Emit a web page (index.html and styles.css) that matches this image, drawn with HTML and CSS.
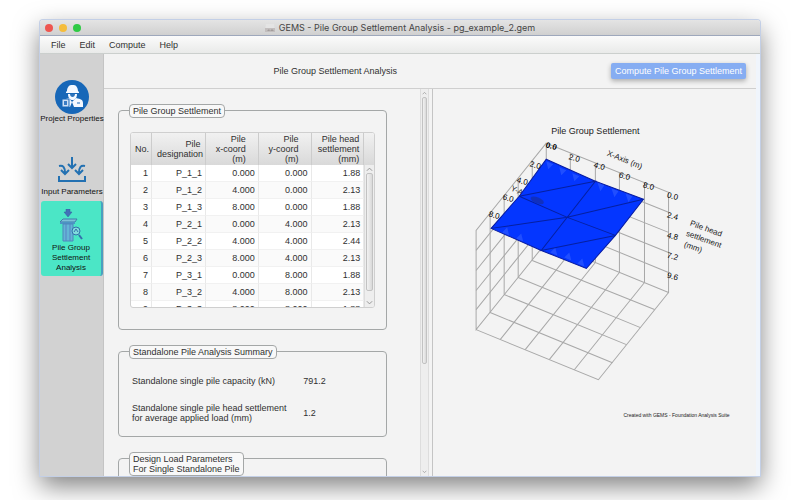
FILE: index.html
```html
<!DOCTYPE html>
<html lang="en">
<head>
<meta charset="utf-8">
<title>GEMS - Pile Group Settlement Analysis</title>
<link rel="stylesheet" href="styles.css">
</head>
<body>
<div class="window">
  <div class="titlebar">
    <div class="lights"><i class="light red"></i><i class="light amber"></i><i class="light green"></i></div>
    <div class="window-title">
      <svg class="doc-icon" viewBox="0 0 10 8" aria-hidden="true"><path d="M1 0h8l1 7H0z" fill="#e4e4e4"/><path d="M0 4h10v4H0z" fill="#c2bebe"/><path d="M2 7l2-2 1 2 2-2 2 2z" fill="#a29c9b"/></svg>
      <span>GEMS - Pile Group Settlement Analysis - pg_example_2.gem</span>
    </div>
  </div>
  <nav class="menubar">
    <button type="button">File</button><button type="button">Edit</button><button type="button">Compute</button><button type="button">Help</button>
  </nav>
  <div class="body">
    <nav class="sidebar">
      <a class="side-item properties" href="#properties">
        <svg class="icon-worker" viewBox="0 0 34 34" aria-hidden="true">
          <circle cx="17" cy="17" r="17" fill="#1767b8"/>
          <path d="M12 11c0-3 2-6 4-6h3c2 0 4 3 4 6l1 1v1H11v-1z" fill="#f4f8ff"/>
          <path d="M13 14c0 8 9 8 9 0z" fill="#f4f8ff"/>
          <path d="M15 14c0 4 5 4 5 0z" fill="#2c72bb"/>
          <path d="M8 27v-5c0-2 2-3 6-4l3 4 4-4c5 1 7 2 7 5v4z" fill="#f4f8ff"/>
          <path d="M17 22l-2 5h4z" fill="#1767b8"/>
          <path d="M22 23h3" stroke="#1767b8"/>
          <path d="M7 19h7v8H7z" fill="#cfe0f5" stroke="#1767b8"/>
          <path d="M9 21v4h3v-4z" fill="#3b7cc4"/>
        </svg>
        <span>Project Properties</span>
      </a>
      <a class="side-item inputs" href="#inputs">
        <svg class="icon-inputs" viewBox="0 0 28 26" fill="none" stroke="#2371b2" stroke-width="2" aria-hidden="true">
          <path d="M1 19v5h26v-5M14 0v10M10 7l4 4 4-4M1 9c4-1 6 1 6 7M3 13l4 4 4-4M27 9c-4-1-6 1-6 7M17 13l4 4 4-4"/>
        </svg>
        <span>Input Parameters</span>
      </a>
      <a class="side-item analysis" href="#analysis" aria-current="page">
        <svg class="icon-pile" viewBox="0 0 24 34" aria-hidden="true">
          <path d="M7 0h4v3h2l-4 5-4-5h2z" fill="#4171b8" stroke="#355f9e" stroke-width=".5"/>
          <path d="M1 13l3-3h14l-2 3z" fill="#7ec0d9" stroke="#3d7fab"/>
          <path d="M1 13h15v2H1z" fill="#4c94c4"/>
          <path d="M4 15h10v17H4z" fill="#64b4d6" stroke="#4c86bb"/>
          <path d="M7 15v17M11 15v17" stroke="#5683c4"/>
          <circle cx="17" cy="22" r="4" fill="#80dcdc" stroke="#356eac"/>
          <path d="M20 26l3 4" fill="none" stroke="#356eac" stroke-width="2"/>
          <path d="M15 23l2-3 2 3" fill="none" stroke="#356eac"/>
        </svg>
        <span>Pile Group Settlement Analysis</span>
      </a>
    </nav>
    <main class="content">
      <header class="page-head">
        <h1>Pile Group Settlement Analysis</h1>
        <button type="button" class="compute">Compute Pile Group Settlement</button>
      </header>
      <div class="split">
        <div class="left">
          <div class="scroll-view">
            <section class="group">
              <h2>Pile Group Settlement</h2>
              <div class="table-box">
                <table>
                  <colgroup><col class="c-no"><col class="c-name"><col class="c-num"><col class="c-num"><col class="c-set"></colgroup>
                  <thead><tr><th>No.</th><th>Pile&nbsp;<br>designation</th><th>Pile<br>x-coord<br>(m)</th><th>Pile<br>y-coord<br>(m)</th><th>Pile head<br>settlement<br>(mm)</th></tr></thead>
                  <tbody>
                    <tr><td>1</td><td>P_1_1</td><td>0.000</td><td>0.000</td><td>1.88</td></tr>
                    <tr><td>2</td><td>P_1_2</td><td>4.000</td><td>0.000</td><td>2.13</td></tr>
                    <tr><td>3</td><td>P_1_3</td><td>8.000</td><td>0.000</td><td>1.88</td></tr>
                    <tr><td>4</td><td>P_2_1</td><td>0.000</td><td>4.000</td><td>2.13</td></tr>
                    <tr><td>5</td><td>P_2_2</td><td>4.000</td><td>4.000</td><td>2.44</td></tr>
                    <tr><td>6</td><td>P_2_3</td><td>8.000</td><td>4.000</td><td>2.13</td></tr>
                    <tr><td>7</td><td>P_3_1</td><td>0.000</td><td>8.000</td><td>1.88</td></tr>
                    <tr><td>8</td><td>P_3_2</td><td>4.000</td><td>8.000</td><td>2.13</td></tr>
                    <tr><td>9</td><td>P_3_3</td><td>8.000</td><td>8.000</td><td>1.88</td></tr>
                  </tbody>
                </table>
                <div class="table-side">
                  <div class="corner"></div>
                  <div class="rail">
                    <svg class="arrow" viewBox="0 0 8 6"><path d="M1 5l3-3 3 3"/></svg>
                    <div class="thumb"></div>
                    <svg class="arrow" viewBox="0 0 8 6"><path d="M1 1l3 3 3-3"/></svg>
                  </div>
                </div>
              </div>
            </section>
            <section class="group">
              <h2>Standalone Pile Analysis Summary</h2>
              <dl class="summary">
                <dt>Standalone single pile capacity (kN)</dt><dd>791.2</dd>
                <dt>Standalone single pile head settlement<br>for average applied load (mm)</dt><dd>1.2</dd>
              </dl>
            </section>
            <section class="group rest">
              <h2>Design Load Parameters<br>For Single Standalone Pile</h2>
            </section>
          </div>
          <div class="rail page-rail">
            <svg class="arrow" viewBox="0 0 8 6"><path d="M1 5l3-3 3 3"/></svg>
            <div class="thumb"></div>
            <svg class="arrow" viewBox="0 0 8 6"><path d="M1 1l3 3 3-3"/></svg>
          </div>
        </div>
        <div class="right">
          <svg class="chart" viewBox="434 89 322 386" role="img" aria-label="Pile group settlement surface">
            <g id="grid" fill="none" stroke="#a8a8a8">
              <path d="M547 143L669 192V292L547 242zM547 143L477 230V329L547 242M477 329L599 379L669 292"/>
              <path d="M571 153v99M596 163v99M620 172v100M645 182v100"/>
              <path d="M547 163l122 49M547 183l122 49M547 203l122 49M547 222l122 50"/>
              <path d="M533 160v100M519 178v99M505 195v99M491 212v100"/>
              <path d="M547 163l-70 87M547 183l-70 87M547 203l-70 87M547 222l-70 87"/>
              <path d="M533 260l122 49M519 277l122 50M505 294l122 50M491 312l122 50"/>
              <path d="M571 252l-70 87M596 262l-70 87M620 272l-70 87M645 282l-70 87"/>
            </g>
            <g class="tilted">
              <text transform="translate(511 190) rotate(24)">Y-Axis (m)</text>
              <text transform="translate(607 155) rotate(22)">X-Axis (m)</text>
              <text transform="translate(690 225) rotate(20)">Pile head</text>
              <text transform="translate(686 235) rotate(20)">settlement</text>
              <text transform="translate(684 246) rotate(20)">(mm)</text>
            </g>
            <path d="M547 159L596 181L644 199L616 235L587 268L542 250L492 228L520 196z" fill="#0436ff" stroke="#071aa0"/>
            <path d="M547 161l7 3-5 5zM560 167l7 3-5 5zM573 173l7 3-5 5zM598 182l7 3-4 6zM612 188l7 3-4 6zM626 193l7 3-4 6zM585 266l-7-3 5-5zM572 260l-7-3 5-5zM558 255l-7-3 5-5zM524 241l-7-3 5-5zM510 235l-7-3 5-5z" fill="#4a72ff" opacity=".4"/>
            <path d="M520 196L596 181L542 250L616 235M492 228L568 217L644 199M520 196L568 217L616 235" fill="none" stroke="#0620a0"/>
            <ellipse cx="538" cy="200" rx="7" ry="3" transform="rotate(22 538 200)" fill="#142fae" opacity=".8"/>
            <g class="ticks">
              <text transform="translate(546 147) rotate(15)" class="origin">0.0</text>
              <text transform="translate(569 159) rotate(15)">2.0</text>
              <text transform="translate(594 167) rotate(15)">4.0</text>
              <text transform="translate(619 177) rotate(15)">6.0</text>
              <text transform="translate(643 187) rotate(15)">8.0</text>
              <text transform="translate(667 197) rotate(15)">0.0</text>
              <text transform="translate(667 217) rotate(15)">2.4</text>
              <text transform="translate(667 237) rotate(15)">4.8</text>
              <text transform="translate(667 257) rotate(15)">7.2</text>
              <text transform="translate(667 277) rotate(15)">9.6</text>
              <text transform="translate(530 166) rotate(15)">2.0</text>
              <text transform="translate(517 182) rotate(15)">4.0</text>
              <text transform="translate(503 199) rotate(15)">6.0</text>
              <text transform="translate(489 216) rotate(15)">8.0</text>
            </g>
            <text class="chart-title" x="596" y="134">Pile Group Settlement</text>
            <text class="credit" x="624" y="416">Created with GEMS - Foundation Analysis Suite</text>
          </svg>
        </div>
      </div>
    </main>
  </div>
</div>
</body>
</html>
```
FILE: styles.css
```css
* { box-sizing: border-box; }
html, body { height: 100%; }
body {
  margin: 0;
  padding: 20px 40px 24px;
  overflow: hidden;
  background: #fff;
  color: #303030;
  font: 9px/10px "Liberation Sans", sans-serif;
}
button { font: inherit; color: inherit; border: 0; background: none; padding: 0; }
h1, h2 { margin: 0; font: inherit; }

.window {
  display: flex;
  flex-direction: column;
  height: 100%;
  background: #f3f3f3;
  border-radius: 3px 3px 0 0;
  box-shadow: 0 0 0 1px #c3cfe6, 0 10px 26px rgba(0, 0, 0, .5);
}
.titlebar {
  display: grid;
  grid-template-columns: 48px 1fr 48px;
  align-items: center;
  height: 16px;
  flex: none;
  background: linear-gradient(#e4e4e4, #d0d0d0);
  border-bottom: 1px solid #9ea8bc;
  border-radius: 3px 3px 0 0;
}
.lights { display: flex; gap: 6px; padding-left: 5px; }
.light { width: 8px; height: 8px; border-radius: 50%; }
.red { background: #ee5650; }
.amber { background: #f5bd3c; }
.green { background: #2fca45; }
.window-title {
  display: flex;
  justify-content: center;
  align-items: center;
  gap: 4px;
  color: #454545;
  font-family: Inter, sans-serif;
  white-space: nowrap;
}
.doc-icon { width: 10px; height: 8px; }

.menubar {
  display: flex;
  align-items: center;
  gap: 14px;
  height: 18px;
  flex: none;
  padding-left: 11px;
  background: linear-gradient(#fbfbfb, #e9eae9);
  border-bottom: 1px solid #cbcfcd;
}

.body { display: flex; flex: 1; min-height: 0; }
.sidebar {
  width: 64px;
  flex: none;
  display: flex;
  flex-direction: column;
  background: #d2d2d2;
  border-right: 1px solid #c4c4c4;
  padding: 26px 0 0 1px;
  font-size: 8px;
}
.side-item {
  display: flex;
  flex-direction: column;
  align-items: center;
  text-align: center;
  text-decoration: none;
  color: #111;
}
.side-item span { white-space: nowrap; }
.icon-worker { width: 34px; height: 34px; }
.icon-inputs { width: 28px; height: 26px; margin-bottom: 4px; }
.inputs { margin-top: 33px; }
.analysis {
  margin-top: 4px;
  padding: 8px 8px 3px;
  background: #4be6c6;
  border-right: 2px solid #4b9fc0;
  border-radius: 3px;
}
.analysis span { white-space: normal; }
.icon-pile { width: 24px; height: 34px; }

.content { flex: 1; min-width: 0; display: flex; flex-direction: column; border-right: 4px solid #f0f5fc; }
.page-head {
  display: flex;
  align-items: center;
  justify-content: space-between;
  height: 35px;
  flex: none;
  padding: 0 10px 0 26%;
  border-bottom: 1px solid #cfcfcf;
}
.compute {
  padding: 3px 4px;
  background: #86adf2;
  color: #fff;
  border-radius: 2px;
  box-shadow: 0 2px 5px rgba(0, 0, 0, .3);
}
.split { display: flex; flex: 1; min-height: 0; }
.left { flex: none; width: 50.5%; display: flex; border-right: 1px solid #c4c4c4; }
.scroll-view { flex: 1; min-width: 0; overflow: hidden; padding: 21px 33px 0 14px; }
.group {
  position: relative;
  border: 1px solid #a4a7a7;
  border-radius: 4px;
  margin-bottom: 21px;
  padding: 21px 11px;
}
.group h2 {
  position: absolute;
  top: -7px;
  left: 10px;
  padding: 1px 3px;
  background: #f8f8f8;
  border: 1px solid #a4a7a7;
  border-radius: 4px;
}
.rest { height: 80px; }
.table-box {
  display: flex;
  height: 176px;
  overflow: hidden;
  border: 1px solid #cfcfcf;
  border-radius: 3px;
  background: #fff;
}
table { flex: 1; border-collapse: separate; border-spacing: 0; table-layout: fixed; width: 100%; align-self: flex-start; }
.c-no { width: 21px; }
.c-name { width: 54px; }
th, td { text-align: right; font-weight: normal; border-right: 1px solid #e9e9e9; }
th { height: 32px; padding: 0 4px 0 0; vertical-align: middle; border-color: #ccc; background: linear-gradient(#f1f1f1, #d9d9d9); line-height: 10px; }
th:nth-child(-n+2) { padding-right: 2px; }
th:nth-child(3), th:nth-child(4) { padding-right: 12px; }
td { height: 17px; padding: 0 3px 0 0; border-bottom: 1px solid #f1f1f1; }
tbody tr:nth-child(even) { background: #fafafa; }
.table-side { width: 10px; display: flex; flex-direction: column; }
.corner { height: 32px; flex: none; background: linear-gradient(#f1f1f1, #d9d9d9); }
.rail {
  flex: 1;
  display: flex;
  flex-direction: column;
  background: #eee;
  border-left: 1px solid #ddd;
  padding: 0 1px;
}
.page-rail { flex: none; width: 9px; margin-right: 3px; border-right: 1px solid #ddd; }
.arrow { width: 100%; height: 8px; flex: none; fill: none; stroke: #8a8a8a; }
.thumb {
  flex: 1;
  border: 1px solid #c2c2c2;
  border-radius: 2px;
  background: linear-gradient(90deg, #f2f2f2, #d9d9d9);
}
.table-side .thumb { margin-bottom: 8px; }
.page-rail .thumb { flex: 0 0 69%; }
.page-rail .arrow:last-child { margin-top: auto; }

.summary {
  display: grid;
  grid-template-columns: 71% 1fr;
  row-gap: 17px;
  align-items: center;
  margin: 0;
  padding: 3px 2px 0;
  white-space: nowrap;
}
.group:nth-child(2) { padding-bottom: 13px; }
.summary dd { margin: 0; }

.right { flex: 1; min-width: 0; display: flex; }
.chart { width: 100%; height: 100%; }
.chart text { fill: #222; }
.ticks { font-size: 8px; }
.chart .ticks text { fill: #000; }
.origin { font-weight: bold; }
.tilted { font-size: 8px; }
.chart-title { font-size: 9px; text-anchor: middle; }
.credit { font-size: 5px; }
```
